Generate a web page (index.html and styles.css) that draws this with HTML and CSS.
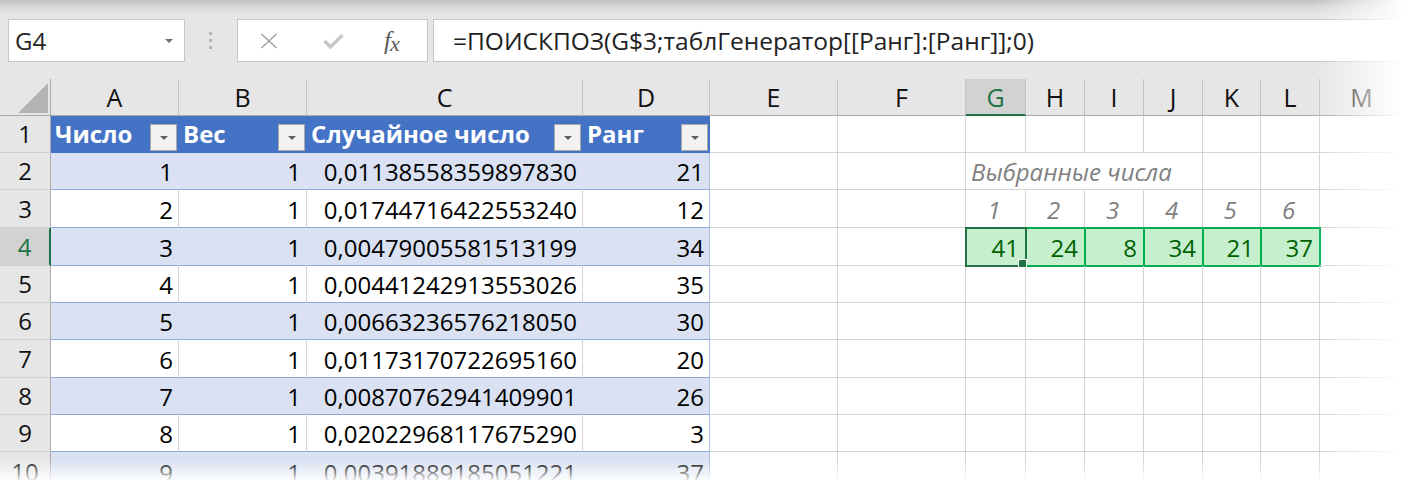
FILE: index.html
```html
<!DOCTYPE html>
<html lang="ru">
<head>
<meta charset="utf-8">
<title>Excel</title>
<link rel="stylesheet" href="styles.css">
</head>
<body>
<div class="app">
  <div class="toolbar">
    <div class="namebox"><span>G4</span><span class="caret"></span></div>
    <div class="grip"><i></i><i></i><i></i></div>
    <div class="fxbox">
      <svg class="ico-x" width="18" height="16" viewBox="0 0 18 16"><path d="M1.5 1 L16.5 15 M16.5 1 L1.5 15" stroke="#a3a3a3" stroke-width="1.6" fill="none"/></svg>
      <svg class="ico-ok" width="21" height="16" viewBox="0 0 21 16"><path d="M1.5 8 L7.5 14 L19.5 2" stroke="#c8c8c8" stroke-width="3.4" fill="none"/></svg>
      <span class="fx">f<span class="fxx">x</span></span>
    </div>
    <div class="formula">=ПОИСКПОЗ(G$3;таблГенератор[[Ранг]:[Ранг]];0)</div>
  </div>

  <div class="sheet">
    <!-- column headers -->
    <div class="c corner"><svg width="30" height="30" viewBox="0 0 30 30"><path d="M0 30 L30 30 L30 0 Z" fill="#b4b4b4"/></svg></div>
    <div class="c ch">A</div><div class="c ch">B</div><div class="c ch">C</div><div class="c ch">D</div>
    <div class="c ch">E</div><div class="c ch">F</div><div class="c ch sel">G</div><div class="c ch">H</div>
    <div class="c ch">I</div><div class="c ch">J</div><div class="c ch">K</div><div class="c ch">L</div><div class="c ch m">M</div>

    <!-- row 1 -->
    <div class="c rh">1</div>
    <div class="c th">Число<span class="flt"></span></div>
    <div class="c th">Вес<span class="flt"></span></div>
    <div class="c th">Случайное число<span class="flt"></span></div>
    <div class="c th">Ранг<span class="flt"></span></div>
    <div class="c"></div><div class="c"></div><div class="c"></div><div class="c"></div><div class="c"></div><div class="c"></div><div class="c"></div><div class="c"></div><div class="c m"></div>

    <!-- row 2 -->
    <div class="c rh">2</div>
    <div class="c b n">1</div><div class="c b n">1</div><div class="c b n">0,01138558359897830</div><div class="c b n last">21</div>
    <div class="c"></div><div class="c"></div>
    <div class="c note nb">Выбранные числа</div><div class="c nb"></div><div class="c nb"></div><div class="c"></div><div class="c"></div><div class="c"></div><div class="c m"></div>

    <!-- row 3 -->
    <div class="c rh">3</div>
    <div class="c w n">2</div><div class="c w n">1</div><div class="c w n">0,01744716422553240</div><div class="c w n last">12</div>
    <div class="c"></div><div class="c"></div>
    <div class="c idx">1</div><div class="c idx">2</div><div class="c idx">3</div><div class="c idx">4</div><div class="c idx">5</div><div class="c idx">6</div><div class="c m"></div>

    <!-- row 4 -->
    <div class="c rh sel">4</div>
    <div class="c b n">3</div><div class="c b n">1</div><div class="c b n">0,00479005581513199</div><div class="c b n last">34</div>
    <div class="c"></div><div class="c"></div>
    <div class="c pick act">41<span class="handle"></span></div><div class="c pick">24</div><div class="c pick">8</div><div class="c pick">34</div><div class="c pick">21</div><div class="c pick">37</div><div class="c m"></div>

    <!-- row 5 -->
    <div class="c rh">5</div>
    <div class="c w n">4</div><div class="c w n">1</div><div class="c w n">0,00441242913553026</div><div class="c w n last">35</div>
    <div class="c"></div><div class="c"></div><div class="c"></div><div class="c"></div><div class="c"></div><div class="c"></div><div class="c"></div><div class="c"></div><div class="c m"></div>

    <!-- row 6 -->
    <div class="c rh">6</div>
    <div class="c b n">5</div><div class="c b n">1</div><div class="c b n">0,00663236576218050</div><div class="c b n last">30</div>
    <div class="c"></div><div class="c"></div><div class="c"></div><div class="c"></div><div class="c"></div><div class="c"></div><div class="c"></div><div class="c"></div><div class="c m"></div>

    <!-- row 7 -->
    <div class="c rh">7</div>
    <div class="c w n">6</div><div class="c w n">1</div><div class="c w n">0,01173170722695160</div><div class="c w n last">20</div>
    <div class="c"></div><div class="c"></div><div class="c"></div><div class="c"></div><div class="c"></div><div class="c"></div><div class="c"></div><div class="c"></div><div class="c m"></div>

    <!-- row 8 -->
    <div class="c rh">8</div>
    <div class="c b n">7</div><div class="c b n">1</div><div class="c b n">0,00870762941409901</div><div class="c b n last">26</div>
    <div class="c"></div><div class="c"></div><div class="c"></div><div class="c"></div><div class="c"></div><div class="c"></div><div class="c"></div><div class="c"></div><div class="c m"></div>

    <!-- row 9 -->
    <div class="c rh">9</div>
    <div class="c w n">8</div><div class="c w n">1</div><div class="c w n">0,02022968117675290</div><div class="c w n last">3</div>
    <div class="c"></div><div class="c"></div><div class="c"></div><div class="c"></div><div class="c"></div><div class="c"></div><div class="c"></div><div class="c"></div><div class="c m"></div>

    <!-- row 10 -->
    <div class="c rh">10</div>
    <div class="c b n">9</div><div class="c b n">1</div><div class="c b n">0,00391889185051221</div><div class="c b n last">37</div>
    <div class="c"></div><div class="c"></div><div class="c"></div><div class="c"></div><div class="c"></div><div class="c"></div><div class="c"></div><div class="c"></div><div class="c m"></div>
  </div>

  <div class="fade-r"></div>
  <div class="fade-b"></div>
</div>
</body>
</html>
```

FILE: styles.css
```css
* { box-sizing: border-box; }

body {
  margin: 0;
  background: #fff;
  font-family: "Open Sans", "Noto Sans", sans-serif;
}

.app {
  position: relative;
  width: 1403px;
  height: 480px;
  overflow: hidden;
}

/* ---------- formula bar ---------- */
.toolbar {
  height: 79px;
  display: flex;
  align-items: flex-start;
  padding: 19px 0 0 8px;
  background: linear-gradient(#c2c2c2 0, #d9d9d9 7px, #e6e6e6 16px);
}

.namebox {
  width: 177px;
  height: 43px;
  flex: none;
  background: #fff;
  border: 1px solid #c6c6c6;
  display: flex;
  align-items: center;
  justify-content: space-between;
  padding: 0 11px 0 6px;
  font-size: 24px;
  line-height: 24px;
  color: #262626;
}

.caret {
  width: 0;
  height: 0;
  border-left: 4px solid transparent;
  border-right: 4px solid transparent;
  border-top: 4px solid #6d6d6d;
}

.grip {
  flex: none;
  margin: 13px 25px 0 24px;
  display: flex;
  flex-direction: column;
  gap: 4px;
}

.grip i {
  display: block;
  width: 3px;
  height: 3px;
  background: #b4b4b4;
}

.fxbox {
  width: 191px;
  height: 43px;
  flex: none;
  background: #fff;
  border: 1px solid #c6c6c6;
  display: flex;
  align-items: center;
  padding-left: 22px;
}

.ico-ok { margin-left: 45px; }

.fx {
  margin-left: 40px;
  font-family: "Liberation Serif", "DejaVu Serif", serif;
  font-style: italic;
  font-size: 25px;
  line-height: 25px;
  color: #5a5a5a;
  letter-spacing: -1px;
}

.fxx { font-size: 22px; position: relative; top: 2px; }

.formula {
  flex: 1;
  height: 43px;
  margin-left: 5px;
  background: #fff;
  border: 1px solid #c6c6c6;
  border-right: none;
  padding-left: 19px;
  font-size: 24.5px;
  line-height: 41px;
  color: #222;
  white-space: nowrap;
}

/* ---------- sheet grid ---------- */
.sheet {
  display: grid;
  grid-template-columns: 51px 128px 128px 276px 127px 128px 128px 60px 59px 59px 59px 58px 59px 1fr;
  grid-template-rows: 37px 37px 37px 38px 38px 37px 37px 38px 37px 37px 40px;
  font-size: 24px;
  line-height: 24px;
  color: #000;
}

.c {
  border-right: 1px solid #d4d4d4;
  border-bottom: 1px solid #d4d4d4;
  display: flex;
  align-items: center;
  white-space: nowrap;
  padding-top: 2px;
}

.m { border-right: none; }

.corner {
  background: #e6e6e6;
  border-right-color: #ababab;
  border-bottom-color: #ababab;
  justify-content: flex-end;
  align-items: flex-end;
  padding: 0 2px 2px 0;
}

.corner svg { display: block; }

.ch {
  background: #e6e6e6;
  border-right-color: #c4c4c4;
  border-bottom-color: #ababab;
  justify-content: center;
  padding: 0;
  color: #111;
  font-size: 25px;
}

.ch.sel {
  background: #d2d2d2;
  color: #217346;
  border-bottom: 2px solid #217346;
}

.rh {
  background: #e6e6e6;
  border-right-color: #ababab;
  border-bottom-color: #d0d0d0;
  justify-content: center;
  padding: 0;
  color: #111;
}

.rh.sel {
  background: #d2d2d2;
  color: #217346;
  border-right: 2px solid #217346;
}

/* table header */
.th {
  background: #4472c4;
  border-right-color: #4472c4;
  border-bottom-color: #4472c4;
  color: #fff;
  font-weight: 700;
  padding: 0 1px 0 4px;
  justify-content: space-between;
}

.flt {
  align-self: flex-end;
  margin-bottom: 1px;
  width: 27px;
  height: 27px;
  background: #f2f2f2;
  border: 1px solid #a9a9a9;
  display: flex;
  align-items: center;
  justify-content: center;
}

.flt::after {
  content: "";
  border-left: 4px solid transparent;
  border-right: 4px solid transparent;
  border-top: 4px solid #5f5f5f;
}

/* table body */
.b {
  background: #d9e1f2;
  border-right-color: #d9e1f2;
  border-bottom-color: #8ea9db;
}

.w {
  background: #fff;
  border-bottom-color: #8ea9db;
}

.last { border-right-color: #a9bde0; }

.n {
  justify-content: flex-end;
  padding-right: 5px;
}

/* right side block */
.note {
  color: #7f7f7f;
  font-style: italic;
  padding-left: 5px;
  overflow: visible;
}

.nb { border-right-color: transparent; }

.idx {
  color: #7f7f7f;
  font-style: italic;
  justify-content: center;
  padding-right: 3px;
}

.pick {
  background: #c6efce;
  color: #006100;
  justify-content: flex-end;
  padding-right: 6px;
  outline: 2px solid #00b050;
  outline-offset: -1px;
}

.act {
  position: relative;
  z-index: 1;
  outline-color: #217346;
}

.handle {
  position: absolute;
  right: -1px;
  bottom: -2px;
  width: 7px;
  height: 7px;
  background: #217346;
  box-shadow: 0 0 0 1px #fff;
}

/* edge fades of the screenshot */
.fade-r {
  position: absolute;
  top: 0;
  right: 0;
  width: 88px;
  height: 100%;
  background: linear-gradient(to right, rgba(255,255,255,0), rgba(255,255,255,0.55) 55%, #fff 100%);
  z-index: 2;
}

.fade-b {
  position: absolute;
  left: 0;
  right: 0;
  bottom: 0;
  height: 20px;
  background: linear-gradient(rgba(255,255,255,0), rgba(255,255,255,0.9) 100%);
  z-index: 2;
}
```
